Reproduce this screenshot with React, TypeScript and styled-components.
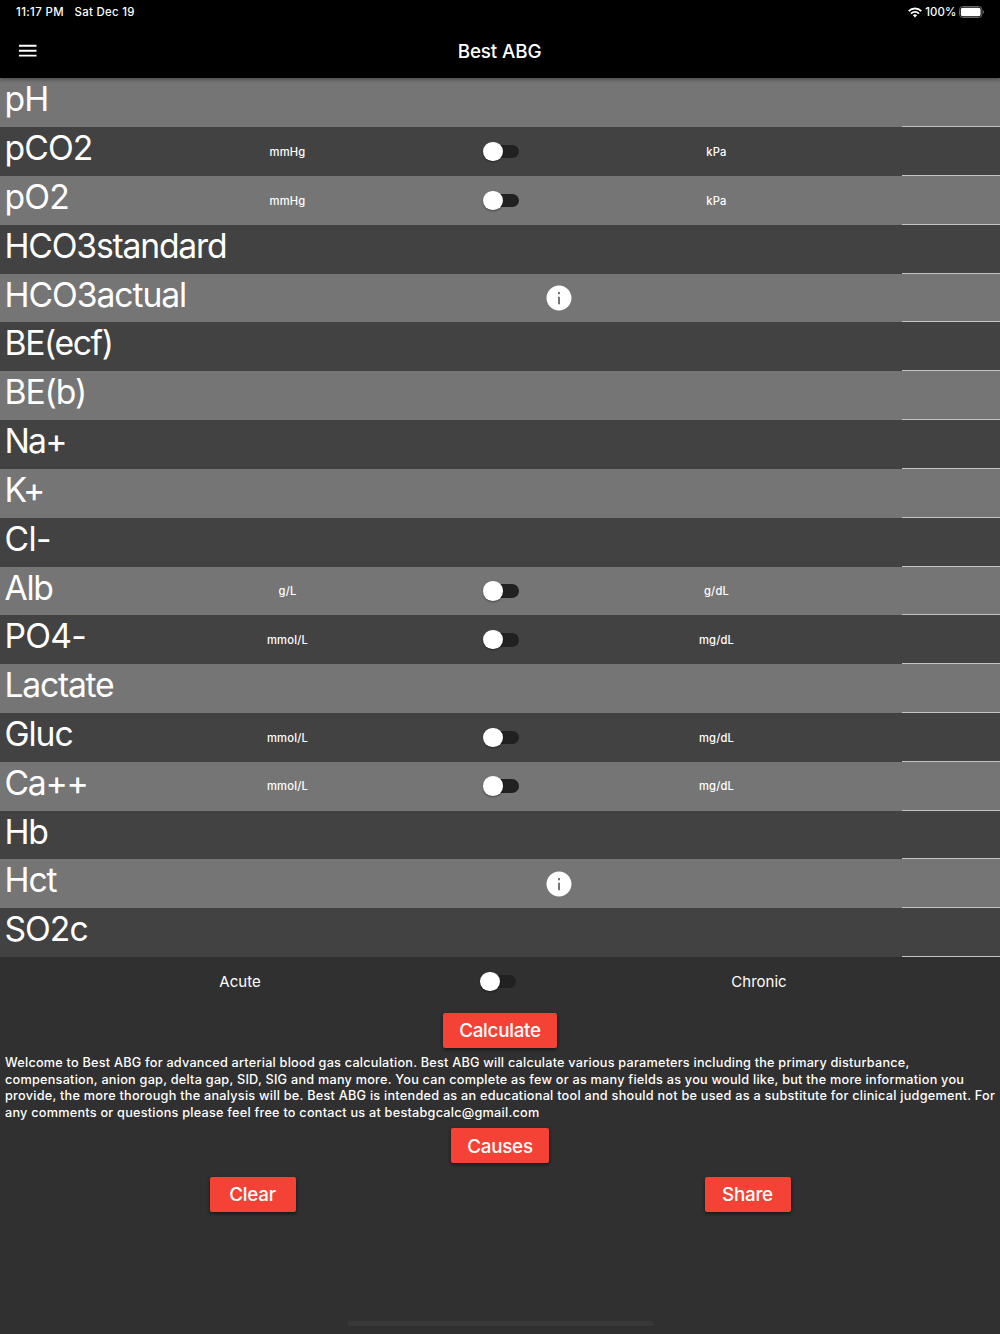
import React from "react";
import styled, { createGlobalStyle } from "styled-components";

const GlobalStyle = createGlobalStyle`
  * { box-sizing: border-box; }
  body { margin: 0; background: #303030; }
`;

const Screen = styled.main`
  width: 1000px;
  height: 1334px;
  display: flex;
  flex-direction: column;
  overflow: hidden;
  background: #303030;
  color: #fff;
  font-family: Inter, "Liberation Sans", sans-serif;
`;

const Header = styled.header`
  flex: none;
  height: 78.4px;
  background: #000;
  position: relative;
  z-index: 1;
  box-shadow: 0 2px 4px rgba(0, 0, 0, 0.22), 0 1px 3px rgba(0, 0, 0, 0.2);
`;

const StatusBar = styled.div`
  height: 24px;
  padding: 0 15px 0 16px;
  display: flex;
  align-items: center;
  font-size: 11.4px;
  font-weight: 500;
  letter-spacing: 0.4px;
  white-space: pre;
`;

const StatusDate = styled.span`
  margin-left: 10.5px;
  letter-spacing: 0.3px;
`;

const StatusRight = styled.div`
  margin-left: auto;
  display: flex;
  align-items: center;
  gap: 3px;
  letter-spacing: 0.1px;
`;

const AppBar = styled.div`
  height: 54.4px;
  padding: 0 15.8px;
  display: grid;
  grid-template-columns: 24px 1fr 25px;
  align-items: center;
`;

const Title = styled.h1`
  margin: 0;
  text-align: center;
  font-size: 18.8px;
  font-weight: 500;
  letter-spacing: -0.12px;
`;

const Row = styled.section<{ $light: boolean }>`
  flex: none;
  height: 48.828px;
  display: grid;
  grid-template-columns: 230px 672px 98px;
  background: ${(p) => (p.$light ? "#757575" : "#424242")};
`;

const Name = styled.div<{ $track: number }>`
  padding-left: 4.5px;
  font-size: 33.7px;
  line-height: 41px;
  font-weight: 400;
  letter-spacing: ${(p) => p.$track}px;
  white-space: nowrap;
`;

const Units = styled.div`
  display: grid;
  grid-template-columns: 115px 316px 111px;
  align-items: center;
  justify-items: center;
`;

const Unit = styled.span`
  padding-top: 0.5px;
  font-size: 11.2px;
  font-weight: 500;
  letter-spacing: 0.2px;
`;

const InfoCell = styled.div`
  display: flex;
  align-items: center;
  justify-content: center;
  margin-right: 15px;
`;

const Field = styled.div`
  border-bottom: 1px solid #c4c4c4;
`;

const Track = styled.span`
  width: 32.2px;
  height: 13.7px;
  border-radius: 7px;
  background: #212121;
  display: flex;
  align-items: center;
`;

const Thumb = styled.span`
  width: 19.5px;
  height: 19.5px;
  flex: none;
  margin-left: -3.8px;
  border-radius: 50%;
  background: #fff;
  box-shadow: 0 1px 2px rgba(0, 0, 0, 0.4);
`;

const Toggle = () => (
  <Track>
    <Thumb />
  </Track>
);

const CourseRow = styled.section`
  flex: none;
  height: 48.828px;
  display: grid;
  grid-template-columns: 480px 40px 478px;
  align-items: center;
  justify-items: center;
`;

const Course = styled.span`
  font-size: 15px;
  letter-spacing: 0;
`;

const Actions = styled.div<{ $spread?: boolean }>`
  flex: none;
  height: 48.828px;
  padding: 0 5px;
  display: flex;
  align-items: center;
  justify-content: ${(p) => (p.$spread ? "space-around" : "center")};
`;

const Button = styled.button<{ $width: number }>`
  width: ${(p) => p.$width}px;
  height: 35.2px;
  padding: 1.2px 0 0;
  border: 0;
  border-radius: 2px;
  background: #f44336;
  color: #fff;
  font: 550 18.8px Inter, "Liberation Sans", sans-serif;
  letter-spacing: -0.25px;
  box-shadow: 0 2px 3px rgba(0, 0, 0, 0.35), 0 1px 4px rgba(0, 0, 0, 0.2);
`;

const Welcome = styled.div`
  flex: none;
  padding: 0.6px 0 0 5px;
  height: 66.4px;
  font-size: 12.7px;
  line-height: 16.6px;
  font-weight: 500;
  white-space: nowrap;
`;

const Line = styled.div<{ $track: number }>`
  letter-spacing: ${(p) => p.$track}px;
`;

const HomeArea = styled.footer`
  margin-top: auto;
  padding-bottom: 7.6px;
  display: flex;
  justify-content: center;
`;

const HomeBar = styled.span`
  width: 307px;
  height: 5.4px;
  border-radius: 3px;
  background: #383838;
`;

const WifiIcon = () => (
  <svg width="14" height="11" viewBox="0 0 14 11" fill="none" stroke="#fff" strokeWidth="1.9">
    <path d="M.7 4.1a8.9 8.9 0 0 1 12.6 0" />
    <path d="M3 6.6a5.6 5.6 0 0 1 8 0" />
    <path d="M7 10.4 4.9 8.2a3 3 0 0 1 4.2 0z" fill="#fff" stroke="none" />
  </svg>
);

const BatteryIcon = () => (
  <svg width="25.6" height="12" viewBox="0 0 25.6 12">
    <rect x=".5" y=".5" width="22.4" height="11" rx="3.2" fill="none" stroke="#666" />
    <rect x="1.8" y="1.8" width="19.8" height="8.4" rx="1.9" fill="#fff" />
    <path d="M23.9 4.2c1.4.5 1.4 3.1 0 3.6z" fill="#777" />
  </svg>
);

const MenuIcon = () => (
  <svg width="23.44" height="23.44" viewBox="0 0 24 24" fill="#fff">
    <path d="M3 18h18v-2H3v2zm0-5h18v-2H3v2zm0-7v2h18V6H3z" />
  </svg>
);

const InfoIcon = () => (
  <svg width="30" height="30" viewBox="0 0 24 24" fill="#fff">
    <path d="M12 2C6.48 2 2 6.48 2 12s4.48 10 10 10 10-4.48 10-10S17.52 2 12 2zm.8 15h-1.6v-6h1.6v6zm0-8h-1.6V7.2h1.6V9z" />
  </svg>
);

type Item = { name: string; track: number; units?: [string, string]; info?: boolean };

const items: Item[] = [
  { name: "pH", track: -0.9 },
  { name: "pCO2", track: -0.9, units: ["mmHg", "kPa"] },
  { name: "pO2", track: -0.8, units: ["mmHg", "kPa"] },
  { name: "HCO3standard", track: -1.2 },
  { name: "HCO3actual", track: -1.07, info: true },
  { name: "BE(ecf)", track: -1.4 },
  { name: "BE(b)", track: -1.1 },
  { name: "Na+", track: -1.8 },
  { name: "K+", track: -0.5 },
  { name: "Cl-", track: -0.6 },
  { name: "Alb", track: -1.3, units: ["g/L", "g/dL"] },
  { name: "PO4-", track: -0.8, units: ["mmol/L", "mg/dL"] },
  { name: "Lactate", track: -1.25 },
  { name: "Gluc", track: -1.1, units: ["mmol/L", "mg/dL"] },
  { name: "Ca++", track: -1.3, units: ["mmol/L", "mg/dL"] },
  { name: "Hb", track: -1.2 },
  { name: "Hct", track: -1.1, info: true },
  { name: "SO2c", track: -1 },
];

const welcome = [
  { text: "Welcome to Best ABG for advanced arterial blood gas calculation. Best ABG will calculate various parameters including the primary disturbance,", track: 0.224 },
  { text: "compensation, anion gap, delta gap, SID, SIG and many more. You can complete as few or as many fields as you would like, but the more information you", track: 0.235 },
  { text: "provide, the more thorough the analysis will be. Best ABG is intended as an educational tool and should not be used as a substitute for clinical judgement. For", track: 0.247 },
  { text: "any comments or questions please feel free to contact us at bestabgcalc@gmail.com", track: 0.235 },
];

export default function App() {
  return (
    <Screen>
      <GlobalStyle />
      <Header>
        <StatusBar>
          <span>11:17 PM</span>
          <StatusDate>Sat Dec 19</StatusDate>
          <StatusRight>
            <WifiIcon />
            <span>100%</span>
            <BatteryIcon />
          </StatusRight>
        </StatusBar>
        <AppBar>
          <MenuIcon />
          <Title>Best ABG</Title>
        </AppBar>
      </Header>
      {items.map((item, i) => (
        <Row key={item.name} $light={i % 2 === 0}>
          <Name $track={item.track}>{item.name}</Name>
          {item.units ? (
            <Units>
              <Unit>{item.units[0]}</Unit>
              <Toggle />
              <Unit>{item.units[1]}</Unit>
            </Units>
          ) : (
            <InfoCell>{item.info && <InfoIcon />}</InfoCell>
          )}
          <Field />
        </Row>
      ))}
      <CourseRow>
        <Course>Acute</Course>
        <Toggle />
        <Course>Chronic</Course>
      </CourseRow>
      <Actions>
        <Button $width={114}>Calculate</Button>
      </Actions>
      <Welcome>
        {welcome.map((line) => (
          <Line key={line.text} $track={line.track}>
            {line.text}
          </Line>
        ))}
      </Welcome>
      <Actions>
        <Button $width={98}>Causes</Button>
      </Actions>
      <Actions $spread>
        <Button $width={86}>Clear</Button>
        <Button $width={86}>Share</Button>
      </Actions>
      <HomeArea>
        <HomeBar />
      </HomeArea>
    </Screen>
  );
}
